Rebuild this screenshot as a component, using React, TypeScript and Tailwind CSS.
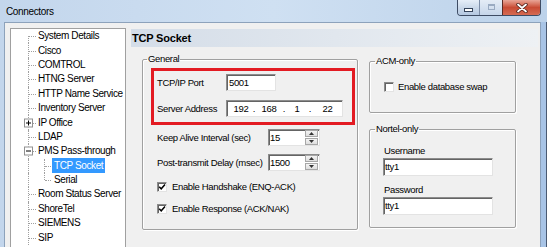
import React from "react";

type TreeItem = {
  label: string;
  expander?: "+" | "-";
  child?: boolean;
  last?: boolean;
  selected?: boolean;
};

const treeItems: TreeItem[] = [
  { label: "System Details" },
  { label: "Cisco" },
  { label: "COMTROL" },
  { label: "HTNG Server" },
  { label: "HTTP Name Service" },
  { label: "Inventory Server" },
  { label: "IP Office", expander: "+" },
  { label: "LDAP" },
  { label: "PMS Pass-through", expander: "-" },
  { label: "TCP Socket", child: true, selected: true },
  { label: "Serial", child: true, last: true },
  { label: "Room Status Server" },
  { label: "ShoreTel" },
  { label: "SIEMENS" },
  { label: "SIP" },
];

const sunken =
  "border border-t-[#8c8c8c] border-l-[#8c8c8c] border-r-[#e3e3e3] border-b-[#e3e3e3] bg-white shadow-[inset_1px_1px_0_#646464]";

const dotted = "border-dotted border-[#a0a0a0]";

function Expander({ sign }: { sign: "+" | "-" }) {
  return (
    <span className="absolute left-[13px] top-1/2 flex h-[9px] w-[9px] -translate-y-1/2 items-center justify-center border border-[#919191] bg-white">
      <svg width="7" height="7" viewBox="0 0 7 7">
        <path d="M1 3.5 H6" stroke="#000" strokeWidth="1" />
        {sign === "+" && <path d="M3.5 1 V6" stroke="#000" strokeWidth="1" />}
      </svg>
    </span>
  );
}

function TreeRow({ item, first }: { item: TreeItem; first: boolean }) {
  return (
    <div className="flex h-[14.4px] items-center">
      <div className={item.child ? "relative h-full w-[41px] shrink-0" : "relative h-full w-[26px] shrink-0"}>
        {/* root line */}
        <span
          className={
            first
              ? `absolute left-[17px] top-1/2 bottom-0 border-l ${dotted}`
              : `absolute left-[17px] top-0 bottom-0 border-l ${dotted}`
          }
        />
        {item.child ? (
          <>
            <span
              className={
                item.last
                  ? `absolute left-[33px] top-0 h-1/2 border-l ${dotted}`
                  : `absolute left-[33px] top-0 bottom-0 border-l ${dotted}`
              }
            />
            <span className={`absolute left-[34px] top-1/2 w-[6px] border-t ${dotted}`} />
          </>
        ) : (
          <span className={`absolute left-[18px] top-1/2 w-[7px] border-t ${dotted}`} />
        )}
        {item.expander && <Expander sign={item.expander} />}
      </div>
      <span
        className={
          item.selected
            ? "flex h-[15px] items-center bg-[#3399ff] px-[2px] text-white"
            : item.child
              ? "px-[2px]"
              : "px-[1px]"
        }
      >
        {item.label}
      </span>
    </div>
  );
}

function Check({ checked }: { checked?: boolean }) {
  return (
    <span className={`flex h-[10px] w-[10px] shrink-0 items-center justify-center ${sunken}`}>
      {checked && (
        <svg width="8" height="8" viewBox="0 0 8 8">
          <path d="M1.2 3.8 L3.2 5.8 L7 1.6" fill="none" stroke="#000" strokeWidth="1.5" />
        </svg>
      )}
    </span>
  );
}

function SpinButton({ up }: { up?: boolean }) {
  return (
    <span className="flex h-[7px] items-center justify-center border border-[#a7a7a7] bg-gradient-to-b from-[#f4f4f4] to-[#dedede]">
      <svg width="5" height="3" viewBox="0 0 5 3">
        <path d={up ? "M0 3 L2.5 0 L5 3 Z" : "M0 0 L2.5 3 L5 0 Z"} fill="#333" />
      </svg>
    </span>
  );
}

function Spinner({ value }: { value: string }) {
  return (
    <div className={`flex h-[17px] w-[52px] items-center ${sunken}`}>
      <span className="flex-1 pl-[1px] leading-[15px]">{value}</span>
      <div className="mr-[1px] flex w-[13px] flex-col gap-[1px]">
        <SpinButton up />
        <SpinButton />
      </div>
    </div>
  );
}

const group =
  "m-0 rounded-[2px] border border-[#a0a0a0] p-0 shadow-[inset_1px_1px_0_#fff,1px_1px_0_#fff]";

export default function App() {
  return (
    <div className="flex h-[247px] w-[547px] flex-col overflow-hidden bg-gradient-to-r from-[#c3d6ec] via-[#cfe0f2] to-[#bcd2ea] font-['Liberation_Sans',Arial,sans-serif] text-black">
      {/* Title bar */}
      <div className="flex h-[22px] shrink-0 items-start justify-between">
        <span className="pl-[6px] pt-[5px] text-[10px] leading-[13px] tracking-[-0.35px]">Connectors</span>
        <div className="mr-[6px] flex h-[16px] overflow-hidden rounded-b-[4px] border border-t-0 border-[#3e4c64]">
          <div className="flex w-[21px] items-end justify-center bg-gradient-to-b from-[#e6eef8] via-[#cbd9ea] to-[#b4c8e1] pb-[3px]">
            <span className="h-[4px] w-[9px] border border-[#34435a] bg-white" />
          </div>
          <div className="flex w-[23px] items-start justify-center border-l border-[#7d8ea8] bg-gradient-to-b from-[#e4ecf6] to-[#c6d6ea] pt-[4px]">
            <span className="h-[6px] w-[7px] border border-t-2 border-[#9aabc2]" />
          </div>
          <div className="flex w-[38px] items-center justify-center border-l border-[#5a2a24] bg-gradient-to-b from-[#e8a597] via-[#c84b34] to-[#d56a52]">
            <svg width="14" height="10" viewBox="0 0 14 10">
              <path d="M3 1.5 L11 8.5 M11 1.5 L3 8.5" stroke="#4a1f19" strokeWidth="3.4" strokeLinecap="round" />
              <path d="M3 1.5 L11 8.5 M11 1.5 L3 8.5" stroke="#fff" strokeWidth="1.8" strokeLinecap="round" />
            </svg>
          </div>
        </div>
      </div>

      {/* Window body */}
      <div className="flex flex-1">
        <div className="w-[4px] shrink-0" />
        <div className="flex flex-1 gap-[5px] border border-b-0 border-[#8da2bb] bg-[#f0f0f0] pl-[5px] pt-[5px]">
          {/* Tree */}
          <div className="w-[116px] shrink-0 border border-b-0 border-[#a0a0a0] bg-white text-[10px] leading-[12px] tracking-[-0.4px]">
            {treeItems.map((item, i) => (
              <TreeRow key={item.label} item={item} first={i === 0} />
            ))}
          </div>

          {/* Right panel */}
          <div className="mt-[1px] flex w-[407px] shrink-0 flex-col text-[9.5px] leading-[12px] tracking-[-0.35px]">
            <div className="flex h-[18px] items-center bg-gradient-to-r from-[#d4dde8] to-[#eef1f4] pl-[1px] text-[11px] font-bold tracking-[-0.2px]">
              TCP Socket
            </div>

            <div className="flex items-start pl-[11px]">
              {/* General */}
              <fieldset className={`mt-[6px] w-[216px] pb-[13px] ${group}`}>
                <legend className="ml-[4px] px-[1px]">General</legend>
                <div className="ml-[8px] mt-[3px] w-[204px] border-[3px] border-[#e31b23] pb-[5px] pl-[3px] pt-[3px]">
                  <div className="flex items-center">
                    <span className="w-[69px]">TCP/IP Port</span>
                    <span className={`h-[17px] w-[50px] pl-[2px] leading-[15px] ${sunken}`}>5001</span>
                  </div>
                  <div className="mt-[9px] flex items-center">
                    <span className="w-[69px]">Server Address</span>
                    <div className={`flex h-[17px] w-[117px] pl-[4px] leading-[15px] ${sunken}`}>
                      <span className="w-[20px] text-center">192</span>
                      <span className="w-[6px] text-center">.</span>
                      <span className="w-[24px] text-center">168</span>
                      <span className="w-[6px] text-center">.</span>
                      <span className="w-[20px] text-center">1</span>
                      <span className="w-[6px] text-center">.</span>
                      <span className="w-[29px] text-center">22</span>
                    </div>
                  </div>
                </div>
                <div className="mt-[4px] flex items-center pl-[14px]">
                  <span className="w-[111px]">Keep Alive Interval (sec)</span>
                  <Spinner value="15" />
                </div>
                <div className="mt-[8px] flex items-center pl-[14px]">
                  <span className="w-[111px]">Post-transmit Delay (msec)</span>
                  <Spinner value="1500" />
                </div>
                <div className="mt-[9px] flex h-[14px] items-center gap-[5px] pl-[14px]">
                  <Check checked />
                  <span>Enable Handshake (ENQ-ACK)</span>
                </div>
                <div className="mt-[8px] flex h-[14px] items-center gap-[5px] pl-[14px]">
                  <Check checked />
                  <span>Enable Response (ACK/NAK)</span>
                </div>
              </fieldset>

              {/* Right column */}
              <div className="ml-[11px] flex w-[147px] flex-col">
                <fieldset className={`mt-[8px] pb-[18px] ${group}`}>
                  <legend className="ml-[5px] px-[1px]">ACM-only</legend>
                  <div className="mt-[13px] flex h-[14px] items-center gap-[4px] pl-[14px]">
                    <Check />
                    <span>Enable database swap</span>
                  </div>
                </fieldset>

                <fieldset className={`mt-[10px] pb-[12px] pl-[13px] ${group}`}>
                  <legend className="-ml-[8px] px-[1px]">Nortel-only</legend>
                  <div className="mt-[10px] pl-[1px]">Username</div>
                  <div className={`mt-[1px] h-[18px] w-[110px] pl-[1px] leading-[16px] ${sunken}`}>tty1</div>
                  <div className="mt-[8px] pl-[1px]">Password</div>
                  <div className={`mt-[1px] h-[18px] w-[110px] pl-[1px] leading-[16px] ${sunken}`}>tty1</div>
                </fieldset>
              </div>
            </div>
          </div>
        </div>
        <div className="w-[6px] shrink-0 border-r border-[#4a5a72] bg-[#a8c4e6]" />
      </div>
    </div>
  );
}
